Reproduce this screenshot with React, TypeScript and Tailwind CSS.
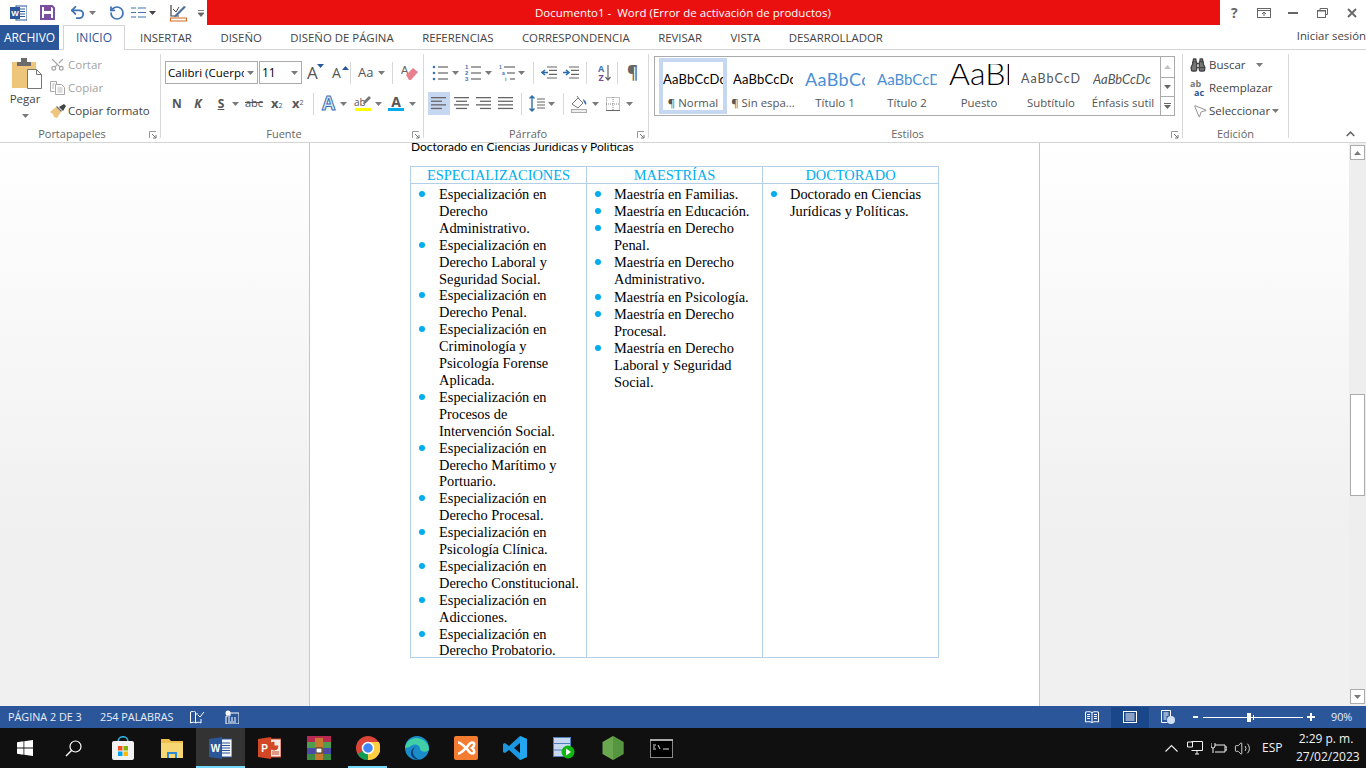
import { Binoculars, MousePointer2, RotateCcw, Scissors, Undo2, Volume2 } from "lucide-react";

const Caret = ({ className = "", color = "#7a7a7a" }: { className?: string; color?: string }) => (
  <svg width="7" height="4" viewBox="0 0 7 4" className={`shrink-0 ${className}`}>
    <path d="M0 0h7L3.5 4z" fill={color} />
  </svg>
);

const Launcher = () => (
  <svg width="8" height="8" viewBox="0 0 8 8" className="absolute right-[3px] top-[9px]">
    <path d="M0.5 7V0.5H7" fill="none" stroke="#9a9a9a" />
    <path d="M3 3l4 4M7 4v3H4" fill="none" stroke="#777" />
  </svg>
);

const Sep = ({ className = "" }: { className?: string }) => (
  <div className={`w-px h-[22px] bg-[#d8d8d8] shrink-0 ${className}`} />
);

const Lines = ({ rows }: { rows: [number, number][] }) => (
  <svg width="16" height="15" viewBox="0 0 16 15" className="shrink-0">
    {rows.map(([x, w], i) => (
      <rect key={i} x={x} y={1 + i * 3.6} width={w} height="1.3" fill="#666" />
    ))}
  </svg>
);

const Group = ({
  label,
  width,
  launcher = true,
  children,
}: {
  label: string;
  width: string;
  launcher?: boolean;
  children: React.ReactNode;
}) => (
  <div className={`${width} shrink-0 my-[4px] border-r border-[#d8d8d8] flex flex-col`}>
    <div className="flex-1 min-h-0">{children}</div>
    <div className={`relative h-[16px] pt-[6px] flex items-center justify-center text-[11px] leading-none text-[#666] ${launcher ? "pr-[16px]" : ""}`}>
      {label}
      {launcher && <Launcher />}
    </div>
  </div>
);

const TitleBar = () => (
  <div className="h-[25px] flex shrink-0 bg-white">
    <div className="w-[207px] flex items-center shrink-0">
      <svg width="17" height="16" viewBox="0 0 17 16" className="ml-[10px]">
        <rect x="6" y="1" width="11" height="14" fill="#fff" stroke="#2b579a" />
        <path d="M10 4h5M10 6.5h5M10 9h5M10 11.5h5" stroke="#2b579a" />
        <rect x="0" y="2" width="10" height="12" fill="#2b579a" />
        <text x="5" y="11" textAnchor="middle" fontSize="8" fontWeight="700" fill="#fff" fontFamily="'Liberation Sans',sans-serif">W</text>
      </svg>
      <svg width="15" height="15" viewBox="0 0 15 15" className="ml-[13px]">
        <path d="M1 1h11l2 2v11H1z" fill="none" stroke="#7b4fa0" strokeWidth="2" />
        <rect x="4" y="1" width="7" height="5" fill="#7b4fa0" />
        <rect x="4" y="9" width="7" height="5" fill="#7b4fa0" />
      </svg>
      <Undo2 size={17} strokeWidth={2.6} color="#3f73b5" className="ml-[14px]" />
      <Caret className="ml-[3px]" />
      <RotateCcw size={16} strokeWidth={2.6} color="#3f73b5" className="ml-[13px]" />
      <svg width="15" height="11" viewBox="0 0 15 11" className="ml-[6px]">
        <path d="M0 1h5M7 1h8M0 5.500h5M7 5.500h8M0 10h5M7 10h8" stroke="#3f73b5" strokeWidth="1.200" />
      </svg>
      <Caret className="ml-[3px]" color="#444" />
      <svg width="17" height="18" viewBox="0 0 17 18" className="ml-[14px]">
        <path d="M1 1v11h8" fill="none" stroke="#444" strokeWidth="1.200" />
        <path d="M5 11l9-9 2 1-9 9-3 1z" fill="#4a6f9a" />
        <path d="M3 5l3 3 3-5" fill="none" stroke="#444" />
        <rect x="0.500" y="14" width="16" height="3" fill="none" stroke="#d2691e" />
      </svg>
      <svg width="6" height="7" viewBox="0 0 6 7" className="ml-[11px] mt-[2px]">
        <path d="M0 0.500h6M0 3h6L3 6.500z" stroke="#666" fill="#666" strokeWidth="0.800" />
      </svg>
    </div>
    <div className="flex-1 bg-[#ea1010] text-white text-[11.5px] leading-[25px] pl-[328px] whitespace-pre">Documento1 -  Word (Error de activación de productos)</div>
    <div className="w-[146px] flex items-center shrink-0 text-[#666]">
      <span className="ml-[11px] w-[10px] text-[14px] leading-none font-bold">?</span>
      <svg width="14" height="10" viewBox="0 0 14 10" className="ml-[16px]">
        <rect x="0.500" y="0.500" width="13" height="9" fill="none" stroke="#666" />
        <path d="M0 2.500h14M7 8V4M5 6l2-2 2 2" fill="none" stroke="#666" />
      </svg>
      <div className="ml-[17px] w-[10px] h-[2px] bg-[#666]" />
      <svg width="11" height="10" viewBox="0 0 11 10" className="ml-[19px]">
        <rect x="0.500" y="2.500" width="8" height="7" fill="none" stroke="#666" />
        <path d="M0 3h9M3 2.500V0.500h7.500v6H9" fill="none" stroke="#666" />
      </svg>
      <svg width="10" height="10" viewBox="0 0 10 10" className="ml-[19px]">
        <path d="M1 1l8 8M9 1l-8 8" stroke="#666" strokeWidth="1.800" />
      </svg>
    </div>
  </div>
);

const tabs = ["INSERTAR", "DISEÑO", "DISEÑO DE PÁGINA", "REFERENCIAS", "CORRESPONDENCIA", "REVISAR", "VISTA", "DESARROLLADOR"];

const TabBar = () => (
  <div className="h-[25px] flex shrink-0 bg-white border-b border-[#d4d4d4] text-[11.4px] text-[#444]">
    <div className="w-[59px] h-[25px] bg-[#2b579a] text-white text-[12px] flex items-center justify-center">ARCHIVO</div>
    <div className="ml-[4px] w-[62px] h-[25px] bg-white border border-b-0 border-[#d4d4d4] text-[#2b579a] text-[12px] flex items-center justify-center">INICIO</div>
    <div className="flex pl-[15px] gap-[28.5px] items-center h-[25px] pt-px">
      {tabs.map((t) => (
        <span key={t}>{t}</span>
      ))}
    </div>
    <span className="ml-auto leading-[21px]">Iniciar sesión</span>
  </div>
);

const Clipboard = () => (
  <Group label="Portapapeles" width="w-[161px]">
    <div className="flex">
      <div className="w-[50px] flex flex-col items-center">
        <svg width="30" height="31" viewBox="0 0 30 31" className="mt-[4px] ml-[4px]">
          <rect x="0" y="4" width="24" height="26" fill="#edc57b" />
          <path d="M5 4h14v4H5z" fill="#6b6b6b" />
          <rect x="9" y="0" width="6" height="5" fill="#6b6b6b" />
          <path d="M15.500 11.500h9l5 5v14h-14z" fill="#fff" stroke="#777" />
          <path d="M24.500 11.500v5h5" fill="none" stroke="#777" />
        </svg>
        <span className="text-[11.5px] text-[#444] mt-[2px] leading-[16px]">Pegar</span>
        <Caret className="mt-[7px]" />
      </div>
      <div className="flex flex-col text-[11.5px] -mt-px">
        <div className="h-[23px] flex items-center text-[#a3a3a3]">
          <Scissors size={15} color="#a8a8a8" className="-rotate-90" />
          <span className="ml-[3px]">Cortar</span>
        </div>
        <div className="h-[23px] flex items-center text-[#a3a3a3]">
          <svg width="15" height="14" viewBox="0 0 15 14">
            <path d="M0.500 0.500h6v3M0.500 0.500v10h4" fill="none" stroke="#a8a8a8" />
            <path d="M5.500 3.500h6l3 3v7h-9z" fill="#fff" stroke="#a8a8a8" />
            <path d="M7.500 7h5M7.500 9h5M7.500 11h5M2 3h3M2 5h2M2 7h2" stroke="#b8b8b8" />
          </svg>
          <span className="ml-[3px]">Copiar</span>
        </div>
        <div className="h-[23px] flex items-center text-[#444]">
          <svg width="16" height="14" viewBox="0 0 16 14">
            <path d="M0 8l6-5 5 5-4 6-3-1-1-3z" fill="#edc57b" />
            <path d="M6 3l5 5 1-1-5-5z" fill="#777" />
            <path d="M9 3l5-3 2 2-3 5z" fill="#444" />
          </svg>
          <span className="ml-[2px]">Copiar formato</span>
        </div>
      </div>
    </div>
  </Group>
);

const FontGroup = () => (
  <Group label="Fuente" width="w-[263px]">
    <div className="flex items-center mt-[7px] h-[23px] pl-[4px]">
      <div className="w-[93px] h-[23px] border border-[#ababab] flex items-center text-[11.5px] text-black pl-[2px]">
        <span className="w-[76px] overflow-hidden whitespace-nowrap">Calibri (Cuerpo</span>
        <Caret className="ml-[3px]" />
      </div>
      <div className="ml-px w-[43px] h-[23px] border border-[#ababab] flex items-center text-[12px] text-black pl-[2px]">
        <span className="w-[29px]">11</span>
        <Caret />
      </div>
      <span className="ml-[5px] w-[15px] text-[17px] leading-none text-[#555] relative">
        A
        <Caret className="absolute right-[-2px] top-0" color="#2b579a" />
      </span>
      <span className="ml-[10px] w-[14px] text-[14px] leading-none text-[#555] relative">
        A
        <Caret className="absolute right-[-3px] top-0 rotate-180" color="#2b579a" />
      </span>
      <Sep className="ml-[4px]" />
      <span className="ml-[7px] text-[13px] text-[#555]">Aa</span>
      <Caret className="ml-[5px]" />
      <Sep className="ml-[7px]" />
      <svg width="17" height="17" viewBox="0 0 17 17" className="ml-[8px]">
        <text x="0" y="10" fontSize="11" fill="#666" fontFamily="'Liberation Sans',sans-serif">A</text>
        <path d="M5 11l7-7 5 4-7 8H8z" fill="#e8808f" />
      </svg>
    </div>
    <div className="flex items-center mt-[8px] h-[23px] text-[#555]">
      <span className="ml-[11px] w-[10px] text-[12px] font-bold text-center">N</span>
      <span className="ml-[11px] w-[10px] text-[12px] font-bold italic text-center">K</span>
      <span className="ml-[13px] w-[10px] text-[12px] font-bold underline text-center">S</span>
      <Caret className="ml-[6px]" />
      <span className="ml-[6px] w-[18px] text-[11px] line-through text-center">abc</span>
      <span className="ml-[8px] w-[15px] text-[13px] font-bold leading-none">
        x<span className="text-[7px] text-[#2b579a] font-normal">2</span>
      </span>
      <span className="ml-[6px] w-[15px] text-[13px] font-bold leading-none">
        x<sup className="text-[7px] font-normal">2</sup>
      </span>
      <Sep className="ml-[6px]" />
      <span className="ml-[8px] w-[16px] text-[19px] leading-none font-bold text-[#d5e3f5] [-webkit-text-stroke:1px_#3f73b5]">A</span>
      <Caret className="ml-[2px]" />
      <div className="ml-[7px] w-[17px] flex flex-col items-center relative">
        <span className="text-[10px] leading-[12px] text-[#555] self-start">ab</span>
        <svg width="9" height="9" viewBox="0 0 9 9" className="absolute right-0 top-0">
          <path d="M1 8l1-3 5-5 2 2-5 5z" fill="#777" />
        </svg>
        <div className="w-[16px] h-[3px] bg-[#ffff00]" />
      </div>
      <Caret className="ml-[4px]" />
      <div className="ml-[6px] w-[16px] flex flex-col items-center">
        <span className="text-[14px] leading-[12px] font-bold text-[#555]">A</span>
        <div className="w-[16px] h-[3px] bg-[#00aeef]" />
      </div>
      <Caret className="ml-[5px]" />
    </div>
  </Group>
);

const BulletIcon = ({ kind }: { kind: "dot" | "num" | "multi" }) => (
  <svg width="16" height="16" viewBox="0 0 16 16" className="shrink-0">
    {[2, 8, 14].map((y, i) => (
      <g key={y}>
        {kind === "dot" && <circle cx="2" cy={y} r="1.300" fill="#3f73b5" />}
        {kind === "num" && (
          <text x="0" y={y + 2} fontSize="6" fontWeight="700" fill="#3f73b5" fontFamily="'Liberation Sans',sans-serif">{i + 1}</text>
        )}
        {kind === "multi" && (
          <text x={i * 3} y={y + 2} fontSize="5" fontWeight="700" fill="#3f73b5" fontFamily="'Liberation Sans',sans-serif">{["1", "a", "i"][i]}</text>
        )}
        <rect x={kind === "multi" ? 5 + i * 3 : 6} y={y - 0.6} width={kind === "multi" ? 11 - i * 3 : 10} height="1.200" fill="#666" />
      </g>
    ))}
  </svg>
);

const IndentIcon = ({ flip }: { flip?: boolean }) => (
  <svg width="16" height="13" viewBox="0 0 16 13" className="shrink-0">
    <path d="M6 1h10M8 4.300h8M8 8.300h8M6 12h10" stroke="#666" strokeWidth="1.200" />
    <path d={flip ? "M0 6.500h5M3 4l3 2.500L3 9" : "M7 6.500H1M4 4L1 6.500 4 9"} fill="none" stroke="#2b6cb0" strokeWidth="1.600" />
  </svg>
);

const ParagraphGroup = () => (
  <Group label="Párrafo" width="w-[225px]">
    <div className="flex items-center mt-[7px] h-[23px]">
      <div className="ml-[8px]"><BulletIcon kind="dot" /></div>
      <Caret className="ml-[4px]" />
      <div className="ml-[6px]"><BulletIcon kind="num" /></div>
      <Caret className="ml-[4px]" />
      <div className="ml-[7px]"><BulletIcon kind="multi" /></div>
      <Caret className="ml-[3px]" />
      <Sep className="ml-[8px]" />
      <div className="ml-[7px]"><IndentIcon /></div>
      <div className="ml-[6px]"><IndentIcon flip /></div>
      <Sep className="ml-[7px]" />
      <div className="ml-[9px] w-[10px] flex flex-col text-[9px] font-bold leading-[9px] text-center">
        <span className="text-[#3f73b5]">A</span>
        <span className="text-[#7b4fa0]">Z</span>
      </div>
      <svg width="6" height="16" viewBox="0 0 6 16" className="-ml-[1px]">
        <path d="M3 0v15M0.500 12L3 15l2.500-3" fill="none" stroke="#666" strokeWidth="1.200" />
      </svg>
      <Sep className="ml-[6px]" />
      <span className="ml-[9px] text-[17px] leading-none font-bold text-[#666]">¶</span>
    </div>
    <div className="flex items-center mt-[8px] h-[23px]">
      <div className="ml-[4px] w-[22px] h-[23px] bg-[#c5d7f1] flex items-center justify-center">
        <Lines rows={[[0, 15], [0, 11], [0, 15], [0, 11]]} />
      </div>
      <div className="ml-[4px]"><Lines rows={[[0, 15], [2, 11], [0, 15], [2, 11]]} /></div>
      <div className="ml-[6px]"><Lines rows={[[0, 15], [4, 11], [0, 15], [4, 11]]} /></div>
      <div className="ml-[6px]"><Lines rows={[[0, 15], [0, 15], [0, 15], [0, 15]]} /></div>
      <Sep className="ml-[7px]" />
      <svg width="16" height="17" viewBox="0 0 16 17" className="ml-[7px]">
        <path d="M3 1v15M0.500 3.500L3 1l2.500 2.500M0.500 13.500L3 16l2.500-2.500" fill="none" stroke="#2b6cb0" strokeWidth="1.400" />
        <path d="M8 4h8M8 7h8M8 10h8M8 13h8" stroke="#666" strokeWidth="1.200" />
      </svg>
      <Caret className="ml-[3px]" />
      <Sep className="ml-[8px]" />
      <svg width="17" height="18" viewBox="0 0 17 18" className="ml-[7px]">
        <path d="M1 9l6-6 5 5-5 5z" fill="#fff" stroke="#777" />
        <path d="M6 1l2 3" stroke="#777" />
        <path d="M12 4c3 2 4 4 3 6-1-1-3-3-3-6z" fill="#3f73b5" />
        <rect x="0.500" y="14.500" width="15" height="3" fill="#eee" stroke="#aaa" />
      </svg>
      <Caret className="ml-[4px]" />
      <svg width="14" height="14" viewBox="0 0 14 14" className="ml-[7px]">
        <rect x="0.500" y="0.500" width="13" height="13" fill="none" stroke="#888" strokeDasharray="1 1" />
        <path d="M7 0v14M0 7h14" stroke="#888" strokeDasharray="1 1" />
        <path d="M0 13.500h14" stroke="#666" />
      </svg>
      <Caret className="ml-[6px]" />
    </div>
  </Group>
);

const styleItems = [
  { preview: "AaBbCcDc", label: "¶ Normal", cls: "text-[13px] text-black tracking-[0.2px]" },
  { preview: "AaBbCcDc", label: "¶ Sin espa...", cls: "text-[13px] text-black tracking-[0.2px]" },
  { preview: "AaBbCc", label: "Título 1", cls: "text-[18px] text-[#4a8fd6] tracking-[0.4px]" },
  { preview: "AaBbCcD", label: "Título 2", cls: "text-[15px] text-[#4a8fd6]" },
  { preview: "AaBl", label: "Puesto", cls: "text-[32px] text-black font-light pb-[12px]" },
  { preview: "AaBbCcD", label: "Subtítulo", cls: "text-[12.5px] text-[#555] tracking-[1px]" },
  { preview: "AaBbCcDc", label: "Énfasis sutil", cls: "text-[13px] text-[#555] italic" },
];

const StylesGroup = () => (
  <Group label="Estilos" width="w-[534px]">
    <div className="ml-[5px] mt-[2px] w-[521px] h-[60px] border border-[#ababab] flex">
      <div className="flex-1 flex items-start pt-px pl-[4px]">
        {styleItems.map((s, i) => (
          <div
            key={s.label}
            className={i === 0
              ? "w-[68px] h-[56px] shrink-0 flex flex-col items-center border-[4px] border-[#c5d7f1]"
              : "w-[72px] h-[56px] shrink-0 flex flex-col items-center"}
          >
            <div className={`w-[60px] h-[30px] overflow-hidden whitespace-nowrap leading-none font-['Lato',sans-serif] flex items-center ${i === 0 ? "mt-[2px] shrink-0" : "mt-[6px] shrink-0"} ${s.cls}`}>
              {s.preview}
            </div>
            <span className="text-[11.4px] leading-[16px] mt-px text-[#555] whitespace-nowrap">{s.label}</span>
          </div>
        ))}
      </div>
      <div className="w-[14px] shrink-0 border-l border-[#ababab] flex flex-col">
        <div className="h-[21px] flex items-center justify-center border-b border-[#ababab]">
          <Caret className="rotate-180" color="#c4c4c4" />
        </div>
        <div className="h-[19px] flex items-center justify-center border-b border-[#ababab]">
          <Caret color="#666" />
        </div>
        <div className="flex-1 flex flex-col items-center justify-center gap-px">
          <div className="w-[7px] h-px bg-[#666]" />
          <Caret color="#666" />
        </div>
      </div>
    </div>
  </Group>
);

const EditGroup = () => (
  <Group label="Edición" width="w-[106px]" launcher={false}>
    <div className="pl-[7px] -mt-px text-[11.5px] text-[#444]">
      <div className="h-[23px] flex items-center">
        <Binoculars size={16} color="#444" fill="#777" strokeWidth={2} />
        <span className="ml-[3px]">Buscar</span>
        <Caret className="ml-[10px]" />
      </div>
      <div className="h-[23px] flex items-center">
        <span className="w-[16px] flex flex-col text-[9px] font-bold leading-[9px]">
          <span className="text-[#777]">ab</span>
          <span className="text-[#2b579a] pl-[4px]">ac</span>
        </span>
        <span className="ml-[3px]">Reemplazar</span>
      </div>
      <div className="h-[23px] flex items-center">
        <MousePointer2 size={16} color="#777" strokeWidth={1.200} className="ml-[2px]" />
        <span className="ml-[1px]">Seleccionar</span>
        <Caret className="ml-[2px]" />
      </div>
    </div>
  </Group>
);

const Ribbon = () => (
  <div className="h-[93px] flex shrink-0 bg-white border-b border-[#d4d4d4]">
    <Clipboard />
    <FontGroup />
    <ParagraphGroup />
    <StylesGroup />
    <EditGroup />
    <svg width="9" height="6" viewBox="0 0 9 6" className="self-end mb-[5px] ml-[57px]">
      <path d="M0.700 5l3.800-3.800L8.300 5" fill="none" stroke="#666" strokeWidth="1.600" />
    </svg>
  </div>
);

const especializaciones = [
  "Especialización en Derecho Administrativo.",
  "Especialización en Derecho Laboral y Seguridad Social.",
  "Especialización en Derecho Penal.",
  "Especialización en Criminología y Psicología Forense Aplicada.",
  "Especialización en Procesos de Intervención Social.",
  "Especialización en Derecho Marítimo y Portuario.",
  "Especialización en Derecho Procesal.",
  "Especialización en Psicología Clínica.",
  "Especialización en Derecho Constitucional.",
  "Especialización en Adicciones.",
  "Especialización en Derecho Probatorio.",
];

const maestrias = [
  "Maestría en Familias.",
  "Maestría en Educación.",
  "Maestría en Derecho Penal.",
  "Maestría en Derecho Administrativo.",
  "Maestría en Psicología.",
  "Maestría en Derecho Procesal.",
  "Maestría en Derecho Laboral y Seguridad Social.",
];

const doctorado = ["Doctorado en Ciencias Jurídicas y Políticas."];

const BulletList = ({ items, first }: { items: string[]; first: boolean }) => (
  <ul className={first ? "pt-[2px] -mb-[2px]" : "pt-[2px] leading-[17.1px]"}>
    {items.map((it) => (
      <li key={it} className="flex">
        <span className={first ? "w-[28px] shrink-0" : "w-[27px] shrink-0"}>
          <span className="block w-[6px] h-[6px] rounded-full bg-[#00aeef] ml-[8px] mt-[5px]" />
        </span>
        <span className="max-w-[141px]">{it}</span>
      </li>
    ))}
  </ul>
);

const Document = () => (
  <div className="flex-1 min-h-0 flex bg-gradient-to-b from-white to-[#f0f0f0] to-[70%]">
    <div className="ml-[309px] w-[731px] bg-white border-x border-[#c6c6c6] overflow-hidden pl-[100px]">
      <div className="-mt-[4px] h-[16px] pl-px text-[12px] leading-[16px] text-black font-['Lato',sans-serif] whitespace-nowrap">Doctorado en Ciencias Juridicas y Politicas</div>
      <table className="mt-[11px] w-[529px] table-fixed border-collapse font-['Liberation_Serif',serif] text-[14.4px] leading-[16.9px] text-black">
        <thead>
          <tr>
            {["ESPECIALIZACIONES", "MAESTRÍAS", "DOCTORADO"].map((h) => (
              <th key={h} className="h-[16px] p-0 leading-[16px] font-normal text-center text-[#00aeef] border border-[#b4d0e8]">
                {h}
              </th>
            ))}
          </tr>
        </thead>
        <tbody>
          <tr>
            {[especializaciones, maestrias, doctorado].map((col, i) => (
              <td key={i} className="p-0 align-top border border-[#b4d0e8]">
                <BulletList items={col} first={i === 0} />
              </td>
            ))}
          </tr>
        </tbody>
      </table>
    </div>
    <div className="ml-auto w-[17px] bg-[#eeeeee] flex flex-col items-center pt-[2px] pb-[2px]">
      <div className="w-[15px] h-[15px] bg-white border border-[#ababab] flex items-center justify-center">
        <Caret className="rotate-180" />
      </div>
      <div className="mt-[234px] w-[15px] h-[102px] bg-white border border-[#ababab]" />
      <div className="mt-auto w-[15px] h-[15px] bg-white border border-[#ababab] flex items-center justify-center">
        <Caret />
      </div>
    </div>
  </div>
);

const StatusBar = () => (
  <div className="h-[22px] shrink-0 bg-[#2b579a] flex items-center text-[10.8px] text-[#e8eef7]">
    <span className="ml-[8px] w-[92px]">PÁGINA 2 DE 3</span>
    <span className="w-[90px]">254 PALABRAS</span>
    <svg width="15" height="13" viewBox="0 0 15 13">
      <path d="M0.500 1c2-1 4-1 5 0v11c-1-1-3-1-5 0zM6 3h2M6 12c1-1 3-1 5 0V8" fill="none" stroke="#fff" />
      <path d="M8 4l2 2 4-5" fill="none" stroke="#fff" />
    </svg>
    <svg width="14" height="14" viewBox="0 0 14 14" className="ml-[20px]">
      <circle cx="3" cy="3" r="2.500" fill="#fff" />
      <path d="M5 3h9v11H1V6h4z" fill="none" stroke="#fff" />
      <path d="M3 8h2M6 8h2M9 8h2M3 10h2M6 10h2M9 10h2M3 12h8" stroke="#fff" />
    </svg>
    <div className="ml-auto flex items-center h-[22px]">
      <svg width="14" height="12" viewBox="0 0 14 12">
        <path d="M7 1.500C5 0.500 3 0.500 0.500 1v10c2.500-0.500 4.500-0.500 6.500 0.500 2-1 4-1 6.500-0.500V1C11 0.500 9 0.500 7 1.500zM7 1.500v10M2 3.500h3M2 5.500h3M2 7.500h3M9 3.500h3M9 5.500h3M9 7.500h3" fill="none" stroke="#fff" />
      </svg>
      <div className="ml-[12px] w-[38px] h-[21px] bg-[#19478a] flex items-center justify-center">
        <svg width="14" height="12" viewBox="0 0 14 12">
          <rect x="0.500" y="0.500" width="13" height="11" fill="none" stroke="#fff" />
          <path d="M2.500 3h9M2.500 5h9M2.500 7h9M2.500 9h9" stroke="#fff" />
        </svg>
      </div>
      <svg width="14" height="14" viewBox="0 0 14 14" className="ml-[12px]">
        <path d="M0.500 0.500h9v7M0.500 0.500v12h6M2.500 3h5M2.500 5h5M2.500 7h3M2.500 9h3" fill="none" stroke="#fff" />
        <circle cx="10" cy="10" r="4" fill="#cfe0f5" />
      </svg>
      <div className="ml-[18px] w-[5px] h-[2px] bg-white" />
      <div className="ml-[5px] w-[100px] h-px bg-white relative">
        <div className="absolute left-[44px] -top-[4px] w-[4px] h-[9px] bg-white" />
        <div className="absolute left-[50px] -top-[2px] w-px h-[5px] bg-white" />
      </div>
      <svg width="8" height="8" viewBox="0 0 8 8" className="ml-[4px]">
        <path d="M0 4h8M4 0v8" stroke="#fff" strokeWidth="2" />
      </svg>
      <span className="ml-[16px] mr-[14px] w-[21px]">90%</span>
    </div>
  </div>
);

const TaskIcon = ({ active, open, children }: { active?: boolean; open?: boolean; children: React.ReactNode }) => (
  <div className={`relative w-[49px] h-[40px] shrink-0 flex items-center justify-center ${active ? "bg-[#333333]" : ""}`}>
    {children}
    {active && <div className="absolute bottom-0 inset-x-0 h-[2px] bg-[#76d9ff]" />}
    {open && <div className="absolute bottom-0 inset-x-[5px] h-[2px] bg-[#76d9ff]" />}
  </div>
);

const Taskbar = () => (
  <div className="h-[40px] shrink-0 bg-[#101010] flex items-center text-white">
    <TaskIcon>
      <svg width="16" height="16" viewBox="0 0 16 16">
        <path d="M0 2.200l6.500-0.900v6.300H0zM7.300 1.200L16 0v7.600H7.300zM0 8.400h6.500v6.300L0 13.800zM7.300 8.400H16V16l-8.700-1.200z" fill="#fff" />
      </svg>
    </TaskIcon>
    <TaskIcon>
      <svg width="17" height="17" viewBox="0 0 17 17">
        <circle cx="10.500" cy="6.500" r="5.500" fill="none" stroke="#fff" strokeWidth="1.200" />
        <path d="M6.500 10.500L1 16" stroke="#fff" strokeWidth="1.400" />
      </svg>
    </TaskIcon>
    <TaskIcon>
      <svg width="24" height="24" viewBox="0 0 24 24">
        <path d="M7 6c0-7 10-7 10 0" fill="none" stroke="#2fb6e8" strokeWidth="1.600" />
        <rect x="1" y="5" width="22" height="19" rx="2" fill="#f2f2f2" />
        <rect x="7" y="10" width="4.500" height="4.500" fill="#f25022" />
        <rect x="12.500" y="10" width="4.500" height="4.500" fill="#7fba00" />
        <rect x="7" y="15.500" width="4.500" height="4.500" fill="#00a4ef" />
        <rect x="12.500" y="15.500" width="4.500" height="4.500" fill="#ffb900" />
      </svg>
    </TaskIcon>
    <TaskIcon>
      <svg width="22" height="20" viewBox="0 0 22 20">
        <path d="M0 1h8l2 2h12v17H0z" fill="#f0c04f" />
        <rect x="0" y="5" width="22" height="15" fill="#f7d774" />
        <path d="M6 20v-6h10v6h-2v-4H8v4z" fill="#2b8ad6" />
      </svg>
    </TaskIcon>
    <TaskIcon active>
      <svg width="23" height="22" viewBox="0 0 23 22">
        <rect x="8" y="2" width="15" height="18" fill="#f4f6fa" stroke="#2b579a" />
        <path d="M13 6h8M13 8.500h8M13 11h8M13 13.500h8M13 16h8" stroke="#2b579a" />
        <path d="M0 2l13-2v22L0 20z" fill="#2b579a" />
        <text x="6.500" y="15" textAnchor="middle" fontSize="10" fontWeight="700" fill="#fff" fontFamily="'Liberation Sans',sans-serif">W</text>
      </svg>
    </TaskIcon>
    <TaskIcon>
      <svg width="23" height="22" viewBox="0 0 23 22">
        <rect x="8" y="2" width="15" height="18" fill="#f4e9e5" stroke="#d24726" />
        <path d="M16 5a4 4 0 1 0 4 4h-4zM14 15h7M14 17h7" fill="#d24726" stroke="#d24726" />
        <path d="M0 2l13-2v22L0 20z" fill="#d24726" />
        <text x="6.500" y="15" textAnchor="middle" fontSize="10" fontWeight="700" fill="#fff" fontFamily="'Liberation Sans',sans-serif">P</text>
      </svg>
    </TaskIcon>
    <TaskIcon>
      <svg width="24" height="24" viewBox="0 0 24 24">
        <rect x="0" y="0" width="24" height="6" fill="#b82a52" />
        <rect x="0" y="6" width="24" height="6" fill="#4d9e4f" />
        <rect x="0" y="12" width="24" height="6" fill="#4a4aa8" />
        <rect x="0" y="18" width="24" height="6" fill="#3f8b45" />
        <rect x="8" y="2" width="8" height="22" fill="#c8792e" />
        <rect x="9" y="12" width="6" height="5" fill="#fff" stroke="#333" />
      </svg>
    </TaskIcon>
    <TaskIcon open>
      <svg width="24" height="24" viewBox="0 0 24 24">
        <circle cx="12" cy="12" r="12" fill="#db4437" />
        <path d="M12 12L1.600 18A12 12 0 0 0 12 24a12 12 0 0 0 5-1z" fill="#0f9d58" />
        <path d="M12 6h10.800A12 12 0 0 1 12 24z" fill="#ffcd40" />
        <circle cx="12" cy="12" r="5.500" fill="#4285f4" stroke="#fff" strokeWidth="1.500" />
      </svg>
    </TaskIcon>
    <TaskIcon>
      <svg width="24" height="24" viewBox="0 0 24 24">
        <circle cx="12" cy="12" r="12" fill="#1a8cc9" />
        <path d="M0 12C1 3 10 0 16 3c5 2 8 6 8 11-3 3-8 2-9-1 0-4-5-6-9-3-2 1-4 2-6 2z" fill="#41d0a5" />
        <path d="M8 16c0-4 3-6 6-6-4 0-8 3-8 7 0 4 4 7 9 7-4-2-7-4-7-8z" fill="#0c3f74" />
      </svg>
    </TaskIcon>
    <TaskIcon>
      <svg width="24" height="24" viewBox="0 0 24 24">
        <rect x="0" y="0" width="24" height="24" rx="2" fill="#f47c30" />
        <path d="M4 6.500c3 0 5 3 8 5.500 3-2.500 3-5.500 6-5.500 3 0 3 3.500 0 5.500 3 2 3 5.500 0 5.500-3 0-3-3-6-5.500-3 2.500-5 5.500-8 5.500" fill="none" stroke="#fff" strokeWidth="2.600" />
      </svg>
    </TaskIcon>
    <TaskIcon>
      <svg width="24" height="24" viewBox="0 0 24 24">
        <path d="M17 0l7 3v18l-7 3-11-10-4 3-2-1V8l2-1 4 3zM17 7l-6 5 6 5z" fill="#1c96e0" />
        <path d="M17 0l7 3v18l-7 3z" fill="#22a7f0" />
      </svg>
    </TaskIcon>
    <TaskIcon>
      <svg width="22" height="22" viewBox="0 0 22 22">
        <rect x="0.500" y="0.500" width="17" height="19" fill="#c7d9f0" stroke="#4f7fbf" />
        <path d="M0 6.500h18M0 13h18" stroke="#4f7fbf" />
        <circle cx="15" cy="15" r="6.500" fill="#0fb80f" />
        <path d="M13 11.500l5 3.500-5 3.500z" fill="#fff" />
      </svg>
    </TaskIcon>
    <TaskIcon>
      <svg width="22" height="24" viewBox="0 0 22 24">
        <path d="M11 0l10.500 6v12L11 24 .5 18V6z" fill="#6aa84f" />
        <path d="M11 0l10.500 6v12L11 24z" fill="#4f8f3a" opacity="0.700" />
      </svg>
    </TaskIcon>
    <TaskIcon>
      <svg width="23" height="19" viewBox="0 0 23 19">
        <rect x="0.500" y="0.500" width="22" height="18" fill="#000" stroke="#888" />
        <rect x="0" y="0" width="23" height="2" fill="#aaa" />
        <path d="M3 6h3M3 8h2M3 10h3M8 6l2 4M13 10h6" stroke="#ddd" />
      </svg>
    </TaskIcon>
    <div className="ml-auto flex items-center h-[40px] text-[12px] text-[#f0f0f0]">
      <svg width="13" height="8" viewBox="0 0 13 8">
        <path d="M0.500 7.500l6-6 6 6" fill="none" stroke="#f0f0f0" strokeWidth="1.100" />
      </svg>
      <svg width="16" height="14" viewBox="0 0 16 14" className="ml-[9px]">
        <path d="M4.500 0.500h11v9h-11M8 13h4M10 9.500V13M0.500 1h5v5h-5z" fill="none" stroke="#f0f0f0" />
      </svg>
      <svg width="16" height="12" viewBox="0 0 16 12" className="ml-[8px]">
        <path d="M4 3h10v7H4M14 5h2v3h-2M0 1v3a2 2 0 0 0 4 0V1M2 6v5" fill="none" stroke="#f0f0f0" />
      </svg>
      <Volume2 size={17} strokeWidth={1.200} color="#f0f0f0" className="ml-[7px]" />
      <span className="ml-[11px] w-[20px]">ESP</span>
      <div className="ml-[14px] mr-[10px] w-[60px] text-center leading-[18px]">
        <div>2:29 p. m.</div>
        <div>27/02/2023</div>
      </div>
    </div>
  </div>
);

const App = () => {
  return (
    <div className="w-[1366px] h-[768px] overflow-hidden flex flex-col font-['Open_Sans',sans-serif] bg-white">
      <TitleBar />
      <TabBar />
      <Ribbon />
      <Document />
      <StatusBar />
      <Taskbar />
    </div>
  );
};

export default App;
